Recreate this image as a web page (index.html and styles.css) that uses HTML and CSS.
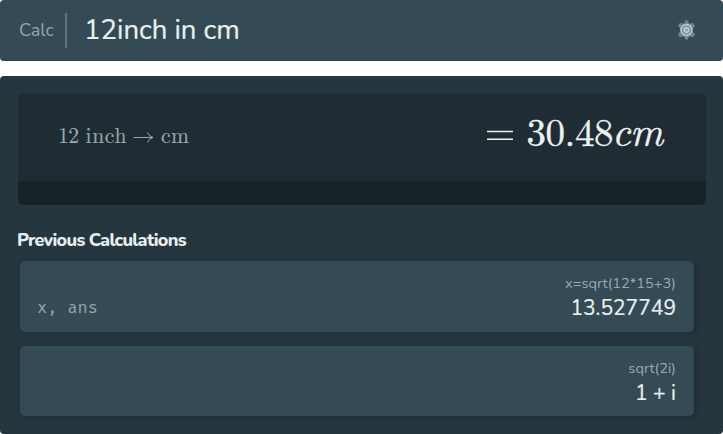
FILE: index.html
```html
<!DOCTYPE html>
<html lang="en">
<head>
<meta charset="utf-8">
<title>Calc</title>
<link rel="stylesheet" href="styles.css">
</head>
<body>
<header class="bar">
  <span class="mode">Calc</span>
  <span class="query">12inch in cm</span>
  <svg class="gear" viewBox="0 0 20 20" aria-hidden="true">
    <path class="teeth" d="M8.500 0h3l1 3.500 4.500-1 2 3-2.500 3v3l2.500 3-2 3-4.500-1-1 3.500h-3l-1-3.500-4.500 1-2-3 2.500-3v-3L1 5.500l2-3 4.500 1z"/>
    <circle class="rim" cx="10" cy="10" r="5.7"/>
    <circle class="hub" cx="10" cy="10" r="2.5"/>
  </svg>
</header>
<main class="panel">
  <section class="result">
    <div class="math">
      <svg class="expression" viewBox="0 0 140 30">
        <text x="0" y="20" textLength="21">12</text>
        <text x="27.500" y="20" textLength="41">inch</text>
        <path d="M75.500 14.500h19M89.500 9.500q1.500 4 5.500 5-4 1-5.500 5"/>
        <text x="103" y="20" textLength="28">cm</text>
      </svg>
      <svg class="answer" viewBox="0 0 190 50">
        <path d="M9 22.500h26M9 30.200h26"/>
        <text x="48.500" y="36.500" textLength="87">30.48</text>
        <text class="unit" x="134 152" y="36.500">cm</text>
      </svg>
    </div>
    <div class="footer"></div>
  </section>
  <h2>Previous Calculations</h2>
  <article class="card">
    <code>x, ans</code>
    <div class="values"><span class="formula">x=sqrt(12*15+3)</span><span class="value">13.527749</span></div>
  </article>
  <article class="card second">
    <div class="values"><span class="formula">sqrt(2i)</span><span class="value">1 + i</span></div>
  </article>
</main>
</body>
</html>
```
FILE: styles.css
```css
* { box-sizing: border-box; }
body { margin: 0; background: #fff; color: #e9efef; font-family: Nunito, Lato, sans-serif; }
.bar { height: 61px; padding: 0 27px 0 19px; display: flex; align-items: center; background: #344a54; border-radius: 4px; border-bottom: 1px solid #2d434d; }
.mode { width: 48px; height: 35px; line-height: 34px; border-right: 2px solid #61757e; font-size: 18px; color: #95a4aa; }
.query { margin-left: 17px; font-size: 27.5px; line-height: 36px; white-space: nowrap; -webkit-text-stroke: .2px #e9efef; }
.gear { width: 19px; height: 20px; margin-left: auto; }
.teeth { fill: #71858f; }
.rim { fill: #7b8e98; stroke: #b4c4cb; stroke-width: 1.7; }
.hub { fill: #94a5ad; stroke: #c4d1d6; stroke-width: 1.3; }
.panel { height: 358px; margin-top: 15px; padding: 17px 17px 0 18px; background: #26363f; border-radius: 4px; overflow: hidden; }
.result { height: 112px; border-radius: 5px; background: #1f2c33; }
.math { height: 88px; display: flex; justify-content: space-between; padding: 0 38px 0 40px; }
.footer { height: 24px; border-radius: 0 0 5px 5px; background: #182228; }
svg { overflow: visible; }
svg text { font-family: "KaTeX_Main", "Latin Modern Roman", "Latin Modern Math", "Liberation Serif", serif; }
.expression { width: 140px; height: 30px; margin-top: 30px; fill: #9ba7aa; font-size: 21.6px; }
.expression text { stroke: #9ba7aa; stroke-width: .2; }
.expression path { fill: none; stroke: #9ba7aa; stroke-width: 1; }
.answer { width: 190px; height: 50px; margin-top: 16px; fill: #edf2f1; font-size: 39px; }
.answer text { stroke: #edf2f1; stroke-width: .35; }
.answer path { stroke: #edf2f1; stroke-width: 1.5; }
.answer .unit { font-family: "KaTeX_Math", "Latin Modern Roman", "Liberation Serif", serif; font-style: italic; font-size: 40.5px; }
h2 { margin: 24px 0 9px -1px; font-size: 18px; line-height: 23px; letter-spacing: -.72px; font-weight: 800; }
.card { width: 674px; height: 71px; margin: 0 0 14px 2px; padding: 13px 18px 0; border-radius: 5px; background: #344a54; box-shadow: 2px 1px 5px rgba(14,25,30,.4); display: flex; }
.second { height: 70px; }
code { margin: 24px 0 0 -1px; font: 16.5px/20px "Fira Code", "Fira Mono", "DejaVu Sans Mono", monospace; color: #95a4a9; }
.values { margin-left: auto; display: flex; flex-direction: column; align-items: flex-end; }
.formula { font-size: 14.6px; line-height: 19px; color: #9aa9af; }
.value { font-size: 21px; line-height: 30px; -webkit-text-stroke: .2px #e9efef; }
```
